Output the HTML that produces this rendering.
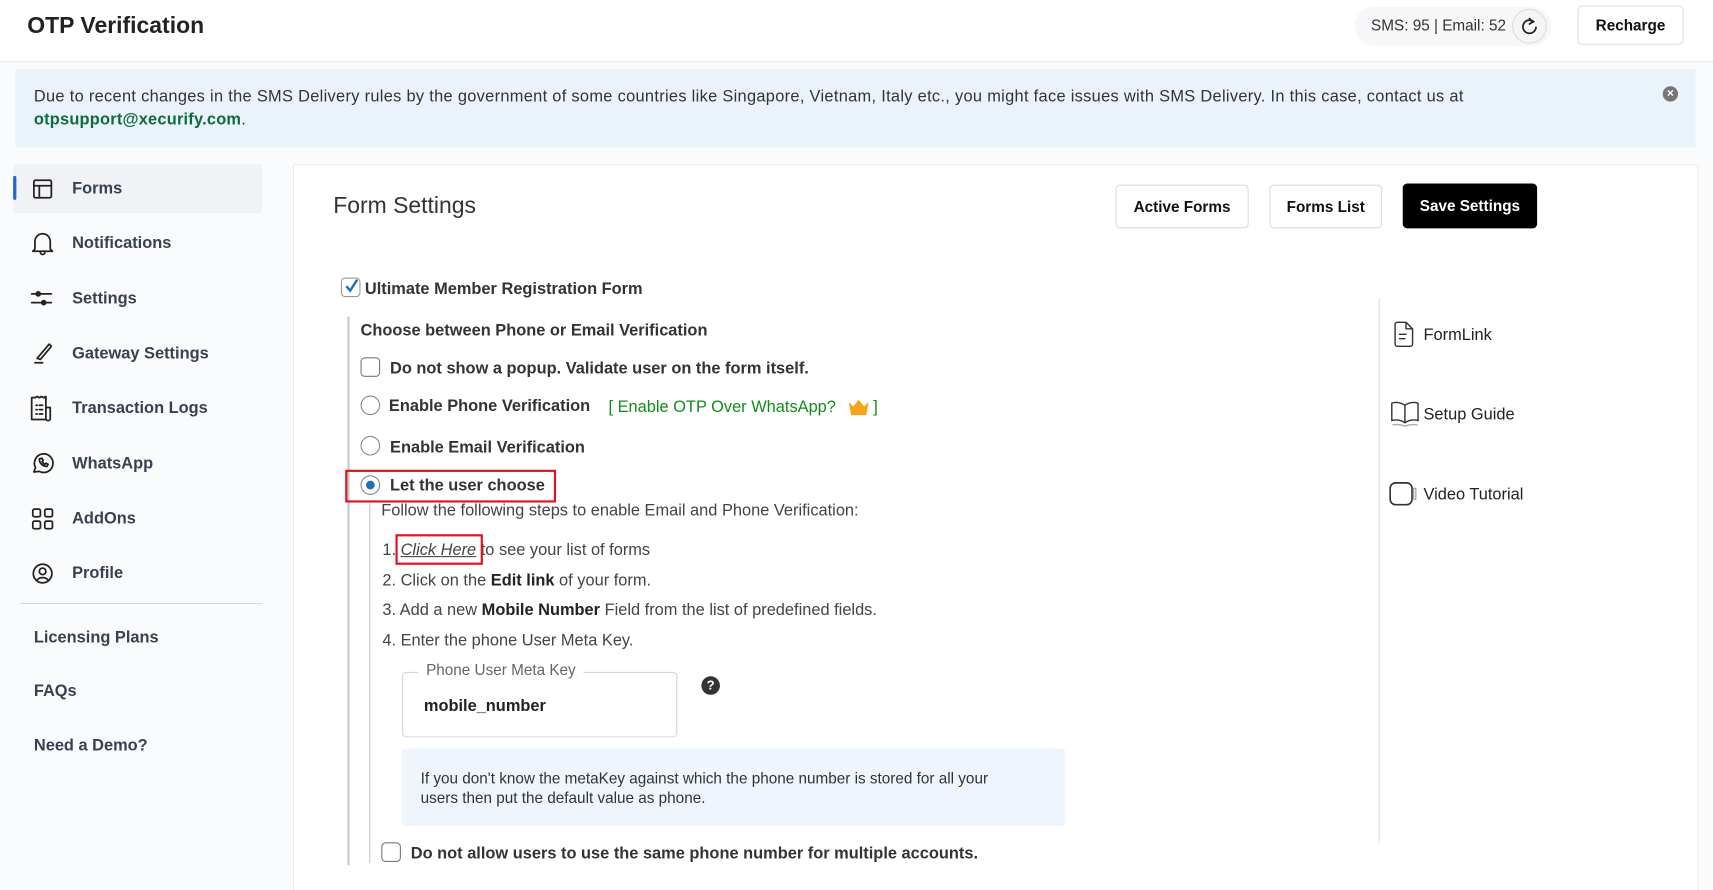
<!DOCTYPE html>
<html><head><meta charset="utf-8"><style>
*{box-sizing:border-box;margin:0;padding:0}
html,body{width:1713px;height:890px;overflow:hidden;background:#fafbfc}
#w{position:absolute;left:0;top:0;width:1568px;height:815px;overflow:hidden;transform:scale(1.09247);transform-origin:0 0;font-family:"Liberation Sans",sans-serif;color:#2b2f36;background:#fafbfc}
.a{position:absolute;white-space:nowrap}
.b{font-weight:bold}
.hdr{left:0;top:0;width:1568px;height:57px;background:#fff;border-bottom:1px solid #e6e8eb}
.btn{position:absolute;border:1px solid #d9dce0;border-radius:4px;background:#fff;font-weight:bold;font-size:14px;text-align:center;color:#111}
.ic{position:absolute;fill:none;stroke:#222;stroke-width:1.6;stroke-linecap:round;stroke-linejoin:round}
.nav{font-size:15px;font-weight:bold;color:#374151}
.cb{position:absolute;width:18px;height:18px;border:1.5px solid #777;border-radius:4px;background:#fff}
.rd{position:absolute;width:18px;height:18px;border:1.5px solid #888;border-radius:50%;background:#fff}
.t15{font-size:15px}
</style></head><body><div id="w">
<div class="a hdr"></div>
<div class="a b" style="left:25px;top:12px;font-size:21px;color:#222">OTP Verification</div>
<div class="a" style="left:1240px;top:6px;width:180px;height:36px;border-radius:18px;background:#f6f7f8"></div>
<div class="a" style="left:1255px;top:15px;font-size:14px;color:#333">SMS: 95 <span style="color:#333">|</span> Email: 52</div>
<div class="a" style="left:1384px;top:8px;width:32px;height:32px;border-radius:50%;border:1px solid #ddd;background:#f4f5f6"></div>
<svg class="ic" style="left:1391px;top:15px" width="18" height="18" viewBox="0 0 18 18"><path d="M13 5 A6 6 0 1 0 15 10"/><path d="M9 2 L12 5 L9 7"/></svg>
<div class="btn" style="left:1444px;top:5px;width:97px;height:36px;line-height:34px">Recharge</div>

<div class="a" style="left:14px;top:63px;width:1538px;height:72px;background:#eaf3fc"></div>
<div class="a t15" style="left:31px;top:80px;color:#333;letter-spacing:0.28px">Due to recent changes in the SMS Delivery rules by the government of some countries like Singapore, Vietnam, Italy etc., you might face issues with SMS Delivery. In this case, contact us at</div>
<div class="a t15" style="left:31px;top:101px;color:#0f6b3c;font-weight:bold;letter-spacing:0.2px">otpsupport@xecurify.com<span style="color:#333;font-weight:normal">.</span></div>
<div class="a" style="left:1522px;top:79px;width:14px;height:14px;border-radius:50%;background:#777;color:#fff;font-size:11px;line-height:14px;text-align:center;font-weight:bold">×</div>

<div class="a" style="left:12px;top:150px;width:228px;height:45px;background:#f0f2f5;border-radius:3px"></div>
<div class="a" style="left:12px;top:161px;width:3px;height:22px;background:#2a62d8;border-radius:2px"></div>
<svg class="ic" style="left:29px;top:163px" width="20" height="20" viewBox="0 0 20 20"><rect x="2" y="2" width="16" height="16" rx="1.5"/><path d="M2 7H18M7 7V18"/></svg>
<svg class="ic" style="left:28px;top:211px" width="22" height="24" viewBox="0 0 22 24"><path d="M4 17V10a7 7 0 0 1 14 0v7l2 2H2z M9 20a2 2 0 0 0 4 0"/></svg>
<svg class="ic" style="left:28px;top:264px" width="20" height="18" viewBox="0 0 20 18"><path d="M1 5H19M1 13H19"/><circle cx="7" cy="5" r="1.8" fill="#222"/><circle cx="12" cy="13" r="1.8" fill="#222"/></svg>
<svg class="ic" style="left:30px;top:312px" width="20" height="22" viewBox="0 0 20 22"><path d="M4 16L15 3 17 5 7 17z M2 20H9"/></svg>
<svg class="ic" style="left:26px;top:361px" width="26" height="26" viewBox="0 0 26 26"><path d="M3 3h3l2 -1 2 1 2-1 2 1 2-1v21H3z M16 12h4v10a2 2 0 0 1-4 0 M7 10h1M10 10h3M7 14h1M10 14h3M7 18h1M10 18h3"/></svg>
<svg class="ic" style="left:28px;top:413px" width="22" height="22" viewBox="0 0 22 22"><path d="M3 19l1.5-4A8.5 8.5 0 1 1 8 18.5z"/><path d="M8 7c0 4 3 7 7 7l1-2-2-1-1 1c-1-.5-2-1.5-2.5-2.5l1-1-1-2z"/></svg>
<svg class="ic" style="left:29px;top:465px" width="20" height="20" viewBox="0 0 20 20"><rect x="1" y="1" width="7" height="7" rx="1.5"/><rect x="12" y="1" width="7" height="7" rx="1.5"/><rect x="1" y="12" width="7" height="7" rx="1.5"/><rect x="12" y="12" width="7" height="7" rx="1.5"/></svg>
<svg class="ic" style="left:29px;top:515px" width="20" height="20" viewBox="0 0 20 20"><circle cx="10" cy="10" r="8.5"/><circle cx="10" cy="8" r="3"/><path d="M5 16c2-3 8-3 10 0"/></svg>
<div class="a nav" style="left:66px;top:164px">Forms</div>
<div class="a nav" style="left:66px;top:214px">Notifications</div>
<div class="a nav" style="left:66px;top:265px">Settings</div>
<div class="a nav" style="left:66px;top:315px">Gateway Settings</div>
<div class="a nav" style="left:66px;top:365px">Transaction Logs</div>
<div class="a nav" style="left:66px;top:416px">WhatsApp</div>
<div class="a nav" style="left:66px;top:466px">AddOns</div>
<div class="a nav" style="left:66px;top:516px">Profile</div>
<div class="a" style="left:18px;top:552px;width:222px;height:1px;background:#d5d8dc"></div>
<div class="a nav" style="left:31px;top:575px">Licensing Plans</div>
<div class="a nav" style="left:31px;top:624px">FAQs</div>
<div class="a nav" style="left:31px;top:674px">Need a Demo?</div>

<div class="a" style="left:268px;top:150px;width:1287px;height:665px;background:#fff;border:1px solid #e8eaed;border-bottom:none;border-radius:3px 3px 0 0"></div>
<div class="a" style="left:305px;top:177px;font-size:21px;color:#333">Form Settings</div>
<div class="btn" style="left:1021px;top:169px;width:122px;height:40px;line-height:38px">Active Forms</div>
<div class="btn" style="left:1162px;top:169px;width:103px;height:40px;line-height:38px">Forms List</div>
<div class="btn" style="left:1284px;top:168px;width:123px;height:41px;line-height:39px;background:#000;color:#fff;border-color:#000">Save Settings</div>

<div class="a" style="left:1262px;top:273px;width:1px;height:499px;background:#ddd"></div>
<svg class="ic" style="left:1275px;top:293px;stroke:#333;stroke-width:1.3" width="20" height="26" viewBox="0 0 20 26"><path d="M4 2h8l6 6v14a2 2 0 0 1-2 2H4a2 2 0 0 1-2-2V4a2 2 0 0 1 2-2z M12 2v6h6 M6 13h6M6 17h5"/></svg>
<div class="a" style="left:1303px;top:298px;font-size:15px;color:#222">FormLink</div>
<svg class="ic" style="left:1272px;top:366px;stroke:#333;stroke-width:1.3" width="28" height="26" viewBox="0 0 28 26"><path d="M14 5C10 2 5 2 2 3v16c3-1 8-1 12 2 4-3 9-3 12-2V3c-3-1-8-1-12 2z M14 5v16"/><path d="M3 23c4-1 8 0 11 1 3-1 7-2 11-1" stroke="#aab"/></svg>
<div class="a" style="left:1303px;top:371px;font-size:15px;color:#222">Setup Guide</div>
<svg class="ic" style="left:1271px;top:440px;stroke:#333;stroke-width:1.5" width="28" height="24" viewBox="0 0 28 24"><rect x="1.5" y="2" width="20" height="20" rx="5"/><rect x="23" y="7" width="2" height="10" stroke="#999" stroke-width="1"/></svg>
<div class="a" style="left:1303px;top:444px;font-size:15px;color:#222">Video Tutorial</div>

<div class="cb" style="left:312px;top:254px;border-color:#999"></div>
<svg class="a" style="left:313px;top:253px" width="18" height="18" viewBox="0 0 18 18"><path d="M4 9l3.5 4L14 3" fill="none" stroke="#2271b1" stroke-width="2.2"/></svg>
<div class="a b t15" style="left:334px;top:256px;color:#333">Ultimate Member Registration Form</div>
<div class="a" style="left:318px;top:290px;width:2px;height:502px;background:#c9c9c9"></div>
<div class="a b t15" style="left:330px;top:294px;color:#333">Choose between Phone or Email Verification</div>
<div class="cb" style="left:330px;top:327px"></div>
<div class="a b t15" style="left:357px;top:329px;color:#333">Do not show a popup. Validate user on the form itself.</div>
<div class="rd" style="left:330px;top:362px"></div>
<div class="a b t15" style="left:356px;top:363px;color:#333">Enable Phone Verification</div>
<div class="a t15" style="left:557px;top:364px;color:#138a1e">[ Enable OTP Over WhatsApp? <span style="display:inline-block;width:30px"></span>]</div>
<svg class="a" style="left:776px;top:365px" width="20" height="16" viewBox="0 0 20 16"><path d="M1 3l4 4 5-6 5 6 4-4-2 12H3z" fill="#f7a31c"/></svg>
<div class="rd" style="left:330px;top:399px"></div>
<div class="a b t15" style="left:357px;top:401px;color:#333">Enable Email Verification</div>
<div class="a" style="left:316px;top:430px;width:193px;height:30px;border:2px solid #e0141e"></div>
<div class="rd" style="left:330px;top:435px"></div>
<div class="a" style="left:335px;top:440px;width:8px;height:8px;border-radius:50%;background:#2271b1"></div>
<div class="a b t15" style="left:357px;top:436px;color:#333">Let the user choose</div>
<div class="a" style="left:338px;top:460px;width:1px;height:330px;background:#c9c9c9"></div>
<div class="a t15" style="left:349px;top:459px;color:#444">Follow the following steps to enable Email and Phone Verification:</div>
<div class="a t15" style="left:350px;top:495px;color:#444">1. <i style="text-decoration:underline">Click Here</i> to see your list of forms</div>
<div class="a" style="left:362px;top:489px;width:80px;height:28px;border:2px solid #e0141e"></div>
<div class="a t15" style="left:350px;top:523px;color:#444">2. Click on the <b style="color:#222">Edit link</b> of your form.</div>
<div class="a t15" style="left:350px;top:550px;color:#444">3. Add a new <b style="color:#222">Mobile Number</b> Field from the list of predefined fields.</div>
<div class="a t15" style="left:350px;top:578px;color:#444">4. Enter the phone User Meta Key.</div>
<div class="a" style="left:368px;top:615px;width:252px;height:60px;border:1px solid #d4d6da;border-radius:4px"></div>
<div class="a" style="left:383px;top:605px;padding:0 7px;background:#fff;font-size:14px;color:#666">Phone User Meta Key</div>
<div class="a b t15" style="left:388px;top:638px;color:#222">mobile_number</div>
<div class="a" style="left:642px;top:619px;width:17px;height:17px;border-radius:50%;background:#333;color:#fff;font-size:12px;font-weight:bold;text-align:center;line-height:17px">?</div>
<div class="a" style="left:368px;top:685px;width:607px;height:71px;background:#eef5fd;border-radius:3px"></div>
<div class="a" style="left:385px;top:703px;font-size:14px;color:#333;line-height:18px">If you don't know the metaKey against which the phone number is stored for all your<br>users then put the default value as phone.</div>
<div class="cb" style="left:349px;top:771px"></div>
<div class="a b t15" style="left:376px;top:773px;color:#333">Do not allow users to use the same phone number for multiple accounts.</div>
</div></body></html>
